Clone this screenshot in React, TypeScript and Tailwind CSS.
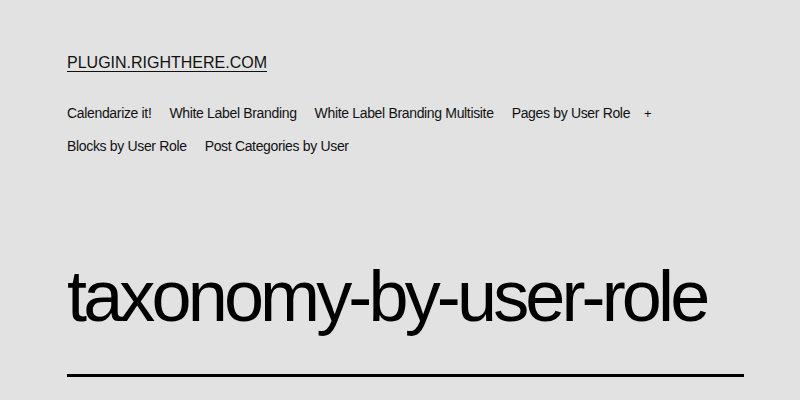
import React from "react";

const NAV_ROW_1 = ["Calendarize it!", "White Label Branding", "White Label Branding Multisite", "Pages by User Role"];
const NAV_ROW_2 = ["Blocks by User Role", "Post Categories by User"];

export default function App() {
  return (
    <div
      className="w-[800px] h-[400px] overflow-hidden bg-[#e2e2e3] text-black"
      style={{ fontFamily: '"Liberation Sans", Arial, sans-serif' }}
    >
      <div className="px-[67px] pt-[53px]">
        {/* Site title */}
        <a href="#" className="block text-[16px] leading-[20px] uppercase underline underline-offset-[3px] decoration-1 text-[#111]">
          plugin.righthere.com
        </a>

        {/* Primary navigation */}
        <nav className="mt-[24px] text-[14px] tracking-[-0.024em] text-[#111]">
          <div className="flex items-center gap-x-[18px] h-[33px]">
            {NAV_ROW_1.map((item) => (
              <a key={item} href="#">{item}</a>
            ))}
            <span className="-ml-[4px] text-[13px]">+</span>
          </div>
          <div className="flex items-center gap-x-[18px] h-[33px]">
            {NAV_ROW_2.map((item) => (
              <a key={item} href="#">{item}</a>
            ))}
          </div>
        </nav>

        {/* Page header */}
        <h1 className="mt-[93px] text-[72px] leading-[80px] tracking-[-3.85px] font-normal">
          taxonomy-by-user-role
        </h1>
        <div className="mt-[38px] h-[3px] bg-black w-[677px]" />
      </div>
    </div>
  );
}
